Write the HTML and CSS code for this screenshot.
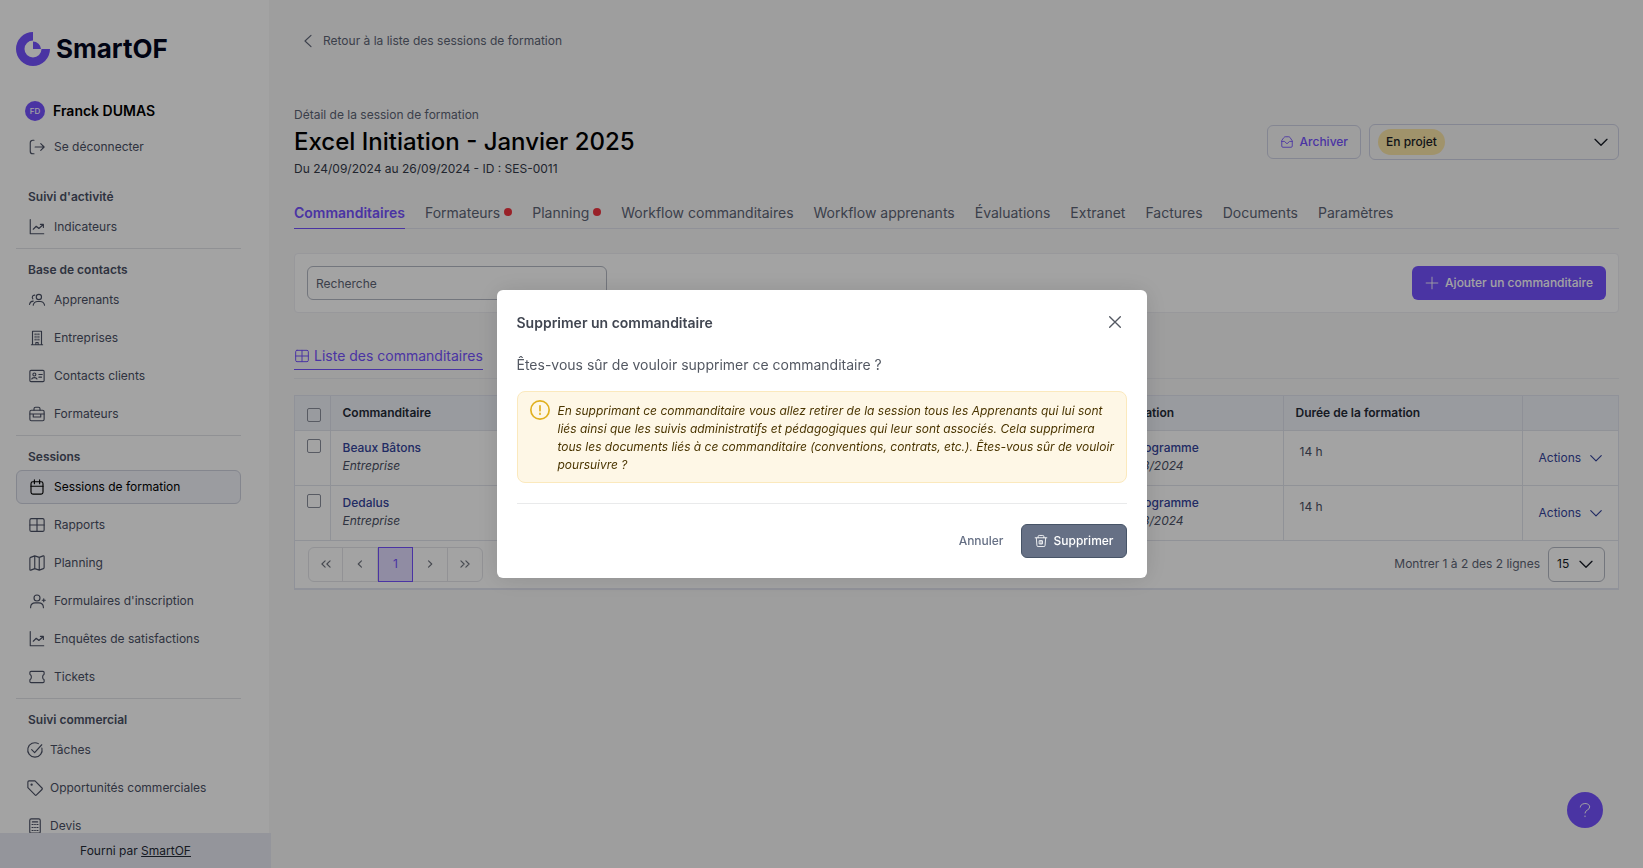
FILE: index.html
```html
<!DOCTYPE html>
<html lang="fr">
<head>
<meta charset="utf-8">
<meta name="viewport" content="width=device-width, initial-scale=1">
<title>SmartOF - Excel Initiation - Janvier 2025</title>
<link rel="stylesheet" href="styles.css">
</head>
<body>
<svg class="sprite" aria-hidden="true">
  <symbol id="logout" viewBox="0 0 24 24"><path d="M8 3H6.500A3.500 3.500 0 0 0 3 6.500v11A3.500 3.500 0 0 0 6.500 21H8M9.500 12H21M17 7.500 21.500 12 17 16.500"/></symbol>
  <symbol id="chart" viewBox="0 0 24 24"><path d="M3 2v19h18M7 15l4-4 3.500 3L20 9M16.500 8.500H20.500V12.500"/></symbol>
  <symbol id="people" viewBox="0 0 24 24"><circle cx="14.500" cy="8" r="3.500"/><path d="M7 19v-.5a6 6 0 0 1 6-4.500h3a6 6 0 0 1 6 4.500v.5M9 5.500a3 3 0 0 0-2.500 5M2 18a5.500 5.500 0 0 1 5-4.500"/></symbol>
  <symbol id="building" viewBox="0 0 24 24"><path d="M6 3h12v18H6zM4.500 21h15M9.500 6.500v1M12 6.500v1M14.500 6.500v1M9.500 10v1M12 10v1M14.500 10v1M9.500 13.500v1M12 13.500v1M14.500 13.500v1M10.500 21v-3h3v3"/></symbol>
  <symbol id="idcard" viewBox="0 0 24 24"><rect x="2.500" y="4.500" width="19" height="15" rx="1.500"/><circle cx="8.500" cy="10" r="2"/><path d="M5 16c.8-2.500 6.200-2.500 7 0M14.500 10H19M14.500 13.500H18"/></symbol>
  <symbol id="briefcase" viewBox="0 0 24 24"><rect x="2.500" y="7" width="19" height="14" rx="2"/><path d="M8 7V5a2 2 0 0 1 2-2h4a2 2 0 0 1 2 2v2M2.500 12h19M7 12v4h10v-4"/></symbol>
  <symbol id="calendar" viewBox="0 0 24 24"><rect x="4" y="5" width="16" height="16.500" rx="2.500"/><path d="M4 11h16M8.500 2.500v5M15.500 2.500v5"/></symbol>
  <symbol id="grid" viewBox="0 0 24 24"><rect x="2.500" y="3.500" width="19" height="17" rx="2"/><path d="M12 3.500v17M2.500 12h19"/></symbol>
  <symbol id="map" viewBox="0 0 24 24"><path d="M9 19.500 3.800 21.500Q2.500 22 2.500 20.500V6Q2.500 5 3.500 4.500L9 2.500 15 4.500 20.200 2.500Q21.500 2 21.500 3.500V18Q21.500 19 20.500 19.500L15 21.500zM9 2.500v17M15 4.500v17"/></symbol>
  <symbol id="useradd" viewBox="0 0 24 24"><circle cx="12" cy="8" r="4"/><path d="M3.500 21v-1a6 6 0 0 1 6-5.500h5a6 6 0 0 1 6 5.500v1M19 11h4M21 9v4"/></symbol>
  <symbol id="ticket" viewBox="0 0 24 24"><path d="M4 4.500h16A1.500 1.500 0 0 1 21.500 6v2.200C18.800 9.500 18.800 14.500 21.500 15.800V18a1.500 1.500 0 0 1-1.500 1.500H4A1.500 1.500 0 0 1 2.500 18v-2.200C5.200 14.500 5.200 9.500 2.500 8.200V6A1.500 1.500 0 0 1 4 4.500z"/></symbol>
  <symbol id="check" viewBox="0 0 24 24"><path d="M21.200 9.500A9.600 9.600 0 1 1 16.500 3.500M7.500 11.500l4 4L21 5"/></symbol>
  <symbol id="tag" viewBox="0 0 24 24"><path d="M2.500 4v7.500l9.500 9.800q1 1 2 0l7.300-7.300q1-1 0-2L12 2.500H4Q2.500 2.500 2.500 4z"/><circle cx="7.500" cy="7.500" r=".8"/></symbol>
  <symbol id="calc" viewBox="0 0 24 24"><rect x="5" y="2.500" width="14" height="19" rx="2"/><path d="M8.500 6.500h7M8 10h1.500M11.500 10h1M14.500 10h1.500M8 14h1.500M11.500 14h1M14.500 14h1.500M8 18h1.500M11.500 18h1M14.500 18h1.500"/></symbol>
  <symbol id="left" viewBox="0 0 24 24"><path d="M16 4.500 8 12l8 7.500"/></symbol>
  <symbol id="down" viewBox="0 0 24 24"><path d="M3 8l9 9 9-9"/></symbol>
  <symbol id="inbox" viewBox="0 0 24 24"><path d="M3 10v9a2 2 0 0 0 2 2h14a2 2 0 0 0 2-2v-9L17 4a3 3 0 0 0-2-1H9a3 3 0 0 0-2 1zM3 11h4.500l4.500 4 4.500-4H21"/></symbol>
  <symbol id="plus" viewBox="0 0 24 24"><path d="M12 2v20M2 12h20"/></symbol>
  <symbol id="close" viewBox="0 0 24 24"><path d="M4 4l16 16M20 4 4 20"/></symbol>
  <symbol id="trash" viewBox="0 0 24 24"><path d="M4 7l1 12.500A2 2 0 0 0 7 21.500h10a2 2 0 0 0 2-2L20 7M2 6.500h20M7 6.500V4.500a2 2 0 0 1 2-2h6a2 2 0 0 1 2 2v2M9.500 11.500h5v5.500h-5zM12 11.500V17"/></symbol>
  <symbol id="prev" viewBox="0 0 24 24"><path d="M14.500 6.500 9 12l5.500 5.500"/></symbol>
  <symbol id="next" viewBox="0 0 24 24"><path d="M9.500 6.500 15 12l-5.500 5.500"/></symbol>
  <symbol id="first" viewBox="0 0 24 24"><path d="M10.500 6.500 5 12l5.500 5.500M19 6.500 13.500 12l5.500 5.500"/></symbol>
  <symbol id="last" viewBox="0 0 24 24"><path d="M5 6.500 10.500 12 5 17.500M13.500 6.500 19 12l-5.500 5.500"/></symbol>
  <symbol id="warning" viewBox="0 0 24 24"><circle cx="12" cy="12" r="11"/><path d="M12 7v6M12 16v1"/></symbol>
  <symbol id="question" viewBox="0 0 24 24"><path d="M5 7.500C5 .5 19 .5 19 7.500c0 4.500-7 4.500-7 9M12 21v1"/></symbol>
</svg>

<div class="app">
  <aside class="sidebar">
    <div class="sidebar-scroll">
      <div class="logo">
        <svg class="logo-mark" viewBox="0 0 34 34" aria-hidden="true"><path d="M17 0A17 17 0 1 0 34 17H25.500A8.500 8.500 0 1 1 17 8.500z"/><path d="M17 9.500V17h8A8 8 0 0 0 17 9.500z"/></svg>
        <span>SmartOF</span>
      </div>
      <div class="user"><span class="avatar">FD</span><span>Franck DUMAS</span></div>
      <nav>
        <a class="item" href="#"><svg><use href="#logout"/></svg>Se déconnecter</a>
        <section class="group first">
          <h2>Suivi d'activité</h2>
          <a class="item" href="#"><svg><use href="#chart"/></svg>Indicateurs</a>
        </section>
        <section class="group">
          <h2>Base de contacts</h2>
          <a class="item" href="#"><svg><use href="#people"/></svg>Apprenants</a>
          <a class="item" href="#"><svg><use href="#building"/></svg>Entreprises</a>
          <a class="item" href="#"><svg><use href="#idcard"/></svg>Contacts clients</a>
          <a class="item" href="#"><svg><use href="#briefcase"/></svg>Formateurs</a>
        </section>
        <section class="group">
          <h2>Sessions</h2>
          <a class="item selected" href="#"><svg><use href="#calendar"/></svg>Sessions de formation</a>
          <a class="item" href="#"><svg><use href="#grid"/></svg>Rapports</a>
          <a class="item" href="#"><svg><use href="#map"/></svg>Planning</a>
          <a class="item" href="#"><svg><use href="#useradd"/></svg>Formulaires d'inscription</a>
          <a class="item" href="#"><svg><use href="#chart"/></svg>Enquêtes de satisfactions</a>
          <a class="item" href="#"><svg><use href="#ticket"/></svg>Tickets</a>
        </section>
        <section class="group compact">
          <h2>Suivi commercial</h2>
          <a class="item" href="#"><svg><use href="#check"/></svg>Tâches</a>
          <a class="item" href="#"><svg><use href="#tag"/></svg>Opportunités commerciales</a>
          <a class="item" href="#"><svg><use href="#calc"/></svg>Devis</a>
        </section>
      </nav>
    </div>
    <footer class="provider">Fourni par <a href="#">SmartOF</a></footer>
  </aside>

  <main class="main">
    <a class="back" href="#"><svg><use href="#left"/></svg>Retour à la liste des sessions de formation</a>
    <header class="head">
      <div>
        <p class="over">Détail de la session de formation</p>
        <h1>Excel Initiation - Janvier 2025</h1>
        <p class="meta">Du 24/09/2024 au 26/09/2024 - ID : SES-0011</p>
      </div>
      <div class="head-actions">
        <button class="btn outline" type="button"><svg><use href="#inbox"/></svg>Archiver</button>
        <div class="status">
          <select aria-label="Statut de la session"><option>En projet</option></select>
          <svg><use href="#down"/></svg>
        </div>
      </div>
    </header>
    <nav class="tabs">
      <a class="active" href="#">Commanditaires</a>
      <a class="dot" href="#">Formateurs</a>
      <a class="dot" href="#">Planning</a>
      <a href="#">Workflow commanditaires</a>
      <a href="#">Workflow apprenants</a>
      <a href="#">Évaluations</a>
      <a href="#">Extranet</a>
      <a href="#">Factures</a>
      <a href="#">Documents</a>
      <a href="#">Paramètres</a>
    </nav>
    <div class="filters">
      <input class="search" type="text" placeholder="Recherche" aria-label="Recherche">
      <button class="btn primary" type="button"><svg><use href="#plus"/></svg>Ajouter un commanditaire</button>
    </div>
    <nav class="subtabs"><a href="#"><svg><use href="#grid"/></svg>Liste des commanditaires</a></nav>
    <div class="table-card">
      <table>
        <colgroup><col class="c-check"><col><col class="c-prog"><col class="c-dur"><col class="c-act"></colgroup>
        <thead>
          <tr><th><input type="checkbox" aria-label="Tout sélectionner"></th><th>Commanditaire</th><th>Formation</th><th>Durée de la formation</th><th></th></tr>
        </thead>
        <tbody>
          <tr><td><input type="checkbox" aria-label="Sélectionner Beaux Bâtons"></td><td><a href="#">Beaux Bâtons</a><em>Entreprise</em></td><td class="prog"><a href="#">Le programme</a><em>28/03/2024</em></td><td class="dur">14 h</td><td class="act"><button type="button">Actions<svg><use href="#down"/></svg></button></td></tr>
          <tr><td><input type="checkbox" aria-label="Sélectionner Dedalus"></td><td><a href="#">Dedalus</a><em>Entreprise</em></td><td class="prog"><a href="#">Le programme</a><em>28/03/2024</em></td><td class="dur">14 h</td><td class="act"><button type="button">Actions<svg><use href="#down"/></svg></button></td></tr>
        </tbody>
      </table>
      <div class="pager">
        <div class="pages">
          <button type="button" aria-label="Première page"><svg><use href="#first"/></svg></button>
          <button type="button" aria-label="Page précédente"><svg><use href="#prev"/></svg></button>
          <button class="current" type="button">1</button>
          <button type="button" aria-label="Page suivante"><svg><use href="#next"/></svg></button>
          <button type="button" aria-label="Dernière page"><svg><use href="#last"/></svg></button>
        </div>
        <label class="rows" for="rows">Montrer 1 à 2 des 2 lignes</label>
        <div class="size"><select id="rows"><option>15</option></select><svg><use href="#down"/></svg></div>
      </div>
    </div>
  </main>
</div>

<button class="help" type="button" aria-label="Aide"><svg><use href="#question"/></svg></button>

<div class="overlay">
  <div class="modal" role="dialog" aria-modal="true" aria-labelledby="modal-title">
    <div class="modal-head">
      <h2 id="modal-title">Supprimer un commanditaire</h2>
      <button type="button" aria-label="Fermer"><svg><use href="#close"/></svg></button>
    </div>
    <p class="ask">Êtes-vous sûr de vouloir supprimer ce commanditaire ?</p>
    <div class="alert">
      <svg><use href="#warning"/></svg>
      <p>En supprimant ce commanditaire vous allez retirer de la session tous les Apprenants qui lui sont liés ainsi que les suivis administratifs et pédagogiques qui leur sont associés. Cela supprimera tous les documents liés à ce commanditaire (conventions, contrats, etc.). Êtes-vous sûr de vouloir poursuivre ?</p>
    </div>
    <div class="modal-foot">
      <button class="btn ghost" type="button">Annuler</button>
      <button class="btn danger" type="button"><svg><use href="#trash"/></svg>Supprimer</button>
    </div>
  </div>
</div>
</body>
</html>
```
FILE: styles.css
```css
* { box-sizing: border-box; }

body {
  margin: 0;
  background: #f7f7f8;
  color: #4a5064;
  font: 12px/18px Inter, "Liberation Sans", sans-serif;
}

h1, h2, p { margin: 0; }
a { color: inherit; text-decoration: none; }
button, input, select { font: inherit; color: inherit; }
button { cursor: pointer; }

svg {
  width: 18px;
  height: 18px;
  flex: none;
  fill: none;
  stroke: currentColor;
  stroke-width: 1.5;
  stroke-linecap: round;
  stroke-linejoin: round;
}

.sprite { display: none; }

.app { display: flex; height: 100vh; overflow: hidden; }

/* Sidebar */
.sidebar {
  flex: none;
  width: 271px;
  display: flex;
  flex-direction: column;
  background: #fff;
}

.sidebar-scroll {
  flex: 1;
  min-height: 0;
  overflow: hidden;
  padding: 32px 28px 0 16px;
  border-right: 2px solid #f7f7f8;
}

.logo {
  display: flex;
  align-items: center;
  gap: 6px;
  height: 34px;
  color: #03071e;
  font-size: 26px;
  font-weight: 700;
}

.logo-mark { width: 34px; height: 34px; fill: #7552ff; stroke: none; }

.user {
  display: flex;
  align-items: center;
  gap: 8px;
  margin: 35px 0 9px;
  padding-left: 9px;
  height: 20px;
  color: #000;
  font-size: 14px;
  font-weight: 600;
}

.avatar {
  width: 20px;
  border-radius: 50%;
  background: #7552ff;
  color: #fff;
  font-size: 8px;
  font-weight: 500;
  line-height: 20px;
  text-align: center;
}

.item {
  display: flex;
  align-items: center;
  gap: 8px;
  height: 34px;
  margin-bottom: 4px;
  padding-left: 11px;
  border: 1px solid transparent;
  border-radius: 6px;
}

.item.selected { background: #f2f4fb; border-color: #cfd2de; color: #000; }

.group { border-top: 1px solid #e2e3e8; padding-top: 12px; }
.group.first { border-top: 0; padding-top: 20px; }
.group h2 { padding: 0 12px 4px; font-size: 12px; font-weight: 600; }
.group.compact .item { gap: 6px; padding-left: 9px; }

.provider {
  padding: 9px 0 8px;
  background: #e8eaf3;
  color: #252b37;
  text-align: center;
}
.provider a { text-decoration: underline; }

/* Page */
.main { flex: 1; min-width: 0; padding: 32px 24px 32px 23px; }

.back { display: flex; align-items: center; gap: 6px; padding-left: 5px; color: #5d6475; }

.head {
  display: flex;
  align-items: center;
  justify-content: space-between;
  margin-top: 56px;
}
.over { color: #5d6475; }
.head h1 { color: #000; font-size: 24px; font-weight: 500; line-height: 36px; }
.meta { color: #343a48; }

.head-actions { display: flex; align-items: center; gap: 8px; }

.btn {
  display: inline-flex;
  align-items: center;
  justify-content: center;
  gap: 6px;
  height: 34px;
  padding: 0 12px;
  border: 1px solid transparent;
  border-radius: 6px;
  background: none;
  font-weight: 500;
}
.btn svg { width: 14px; height: 14px; }
.outline { border-color: #cfd2e4; color: #7552ff; }
.primary { background: #7552ff; color: #fff; }

.status {
  display: flex;
  align-items: center;
  justify-content: space-between;
  width: 250px;
  height: 36px;
  padding: 0 9px 0 8px;
  border: 1px solid #cfd2e4;
  border-radius: 6px;
  color: #181d27;
}
.status svg { width: 16px; height: 16px; stroke-width: 2; }

select {
  appearance: none;
  border: 0;
  background: none;
  padding: 0;
}

.status select {
  height: 26px;
  padding: 0 8px;
  border-radius: 13px;
  background: #fbe6a8;
  font-weight: 500;
}

.tabs {
  display: flex;
  gap: 20px;
  margin-top: 22px;
  border-bottom: 1px solid #e2e3ee;
  color: #5d6475;
  font-size: 14px;
  line-height: 26px;
}
.tabs a { padding: 0 0 2px; margin-bottom: -1px; border-bottom: 1px solid transparent; white-space: nowrap; }
.tabs .active { border-color: #7552ff; color: #7552ff; font-weight: 600; }
.dot::after {
  content: "";
  display: inline-block;
  width: 8px;
  height: 8px;
  margin-left: 4px;
  border-radius: 50%;
  background: #f0353f;
  vertical-align: 2px;
}

.filters {
  display: flex;
  justify-content: space-between;
  margin-top: 24px;
  padding: 12px;
  border: 1px solid #eeeef3;
  border-radius: 4px;
  background: #fff;
}

.search {
  width: 300px;
  height: 34px;
  padding: 0 8px;
  border: 1px solid #b5b9c4;
  border-radius: 6px;
  background: #fff;
}
.search::placeholder { color: #5d6475; opacity: 1; }

.subtabs {
  margin-top: 30px;
  padding-bottom: 8px;
  border-bottom: 1px solid #eaebf0;
  display: flex;
  color: #7552ff;
  font-size: 14px;
  line-height: 26px;
}
.subtabs a { display: flex; align-items: center; gap: 4px; border-bottom: 1px solid #7552ff; }
.subtabs svg { width: 16px; height: 16px; }

/* Table */
.table-card {
  margin-top: 16px;
  border: 1px solid #e2e4f0;
  border-bottom-width: 2px;
  background: #fff;
}

table { width: 100%; border-collapse: collapse; table-layout: fixed; }
.c-check { width: 35px; }
.c-prog { width: 180px; }
.c-dur { width: 239px; }
.c-act { width: 96px; }

th {
  height: 34px;
  padding: 0 12px;
  background: #eff2f9;
  border-right: 1px solid #dfe2ec;
  color: #252b37;
  font-weight: 600;
  text-align: left;
}
td {
  height: 55px;
  padding: 8px 12px;
  border: 1px solid #e2e4ec;
  border-left: 0;
  vertical-align: top;
}
th:last-child, td:last-child { border-right: 0; }
td a, td em { display: block; }
td a { color: #34449c; font-weight: 500; }
td.dur { padding: 12px 16px; }
td.act { padding: 0; vertical-align: middle; }
.act button {
  display: flex;
  align-items: center;
  gap: 8px;
  margin-left: 16px;
  padding: 0;
  border: 0;
  background: none;
  color: #34449c;
}
.act svg { width: 14px; height: 14px; stroke-width: 2; }

input[type="checkbox"] {
  appearance: none;
  display: block;
  width: 14px;
  height: 14px;
  margin: 0;
  border: 1px solid #8a8f9c;
  border-radius: 2px;
}
th input[type="checkbox"] { margin-top: 4px; }

.pager { display: flex; align-items: center; padding: 6px 13px; }
.pages { display: flex; margin-right: auto; border: 1px solid #e4e5ea; border-radius: 6px; }
.pages button {
  display: flex;
  align-items: center;
  justify-content: center;
  width: 35px;
  height: 33px;
  padding: 0;
  border: 0;
  border-right: 1px solid #e4e5ea;
  background: none;
  color: #717680;
}
.pages button:first-child, .pages button:last-child { width: 34px; }
.pages button:last-child { border-right: 0; }
.pages svg { width: 14px; height: 14px; stroke-width: 2; }
.pages .current { height: 35px; margin: -1px 0; border: 1px solid #7552ff; background: #e2dcff; color: #7552ff; }
.rows { margin-right: 8px; color: #5d6475; }
.size {
  display: flex;
  align-items: center;
  justify-content: space-between;
  width: 57px;
  height: 35px;
  padding: 0 10px 0 8px;
  border: 1px solid #b5b9c4;
  border-radius: 6px;
  color: #181d27;
}
.size svg { width: 16px; height: 16px; stroke-width: 2; }

.help {
  position: fixed;
  right: 40px;
  bottom: 40px;
  display: flex;
  align-items: center;
  justify-content: center;
  width: 36px;
  height: 36px;
  border: 0;
  border-radius: 50%;
  background: #7552ff;
  color: #fff;
}
.help svg { width: 16px; height: 16px; }

/* Dialog */
.overlay {
  position: fixed;
  inset: 0;
  display: flex;
  align-items: center;
  justify-content: center;
  background: rgba(0, 0, 0, 0.36);
}

.modal {
  width: 650px;
  padding: 20px;
  border-radius: 6px;
  background: #fff;
  box-shadow: 0 1px 24px rgba(0, 0, 0, 0.12);
}

.modal-head { display: flex; align-items: center; justify-content: space-between; height: 26px; }
.modal-head h2 { font-size: 14px; font-weight: 600; color: #414651; }
.modal-head button { display: flex; padding: 0 4px 2px; border: 0; background: none; color: #535862; }
.modal-head svg { width: 16px; height: 16px; stroke-width: 2; }

.ask { margin: 18px 0 15px; color: #535862; font-size: 14px; line-height: 22px; }

.alert {
  display: flex;
  gap: 8px;
  padding: 8px 4px 8px 12px;
  border: 1px solid #fbe9bd;
  border-radius: 8px;
  background: #fef7e6;
  color: #4a3500;
  font-style: italic;
}
.alert svg { width: 20px; height: 20px; color: #e0b020; stroke-width: 2; }
.alert p { padding-top: 2px; }

.modal-foot {
  display: flex;
  justify-content: flex-end;
  gap: 4px;
  margin-top: 20px;
  padding-top: 20px;
  border-top: 1px solid #e9eaeb;
}
.ghost { color: #667085; }
.danger { background: #667085; border-color: #475467; color: #fff; }
```
